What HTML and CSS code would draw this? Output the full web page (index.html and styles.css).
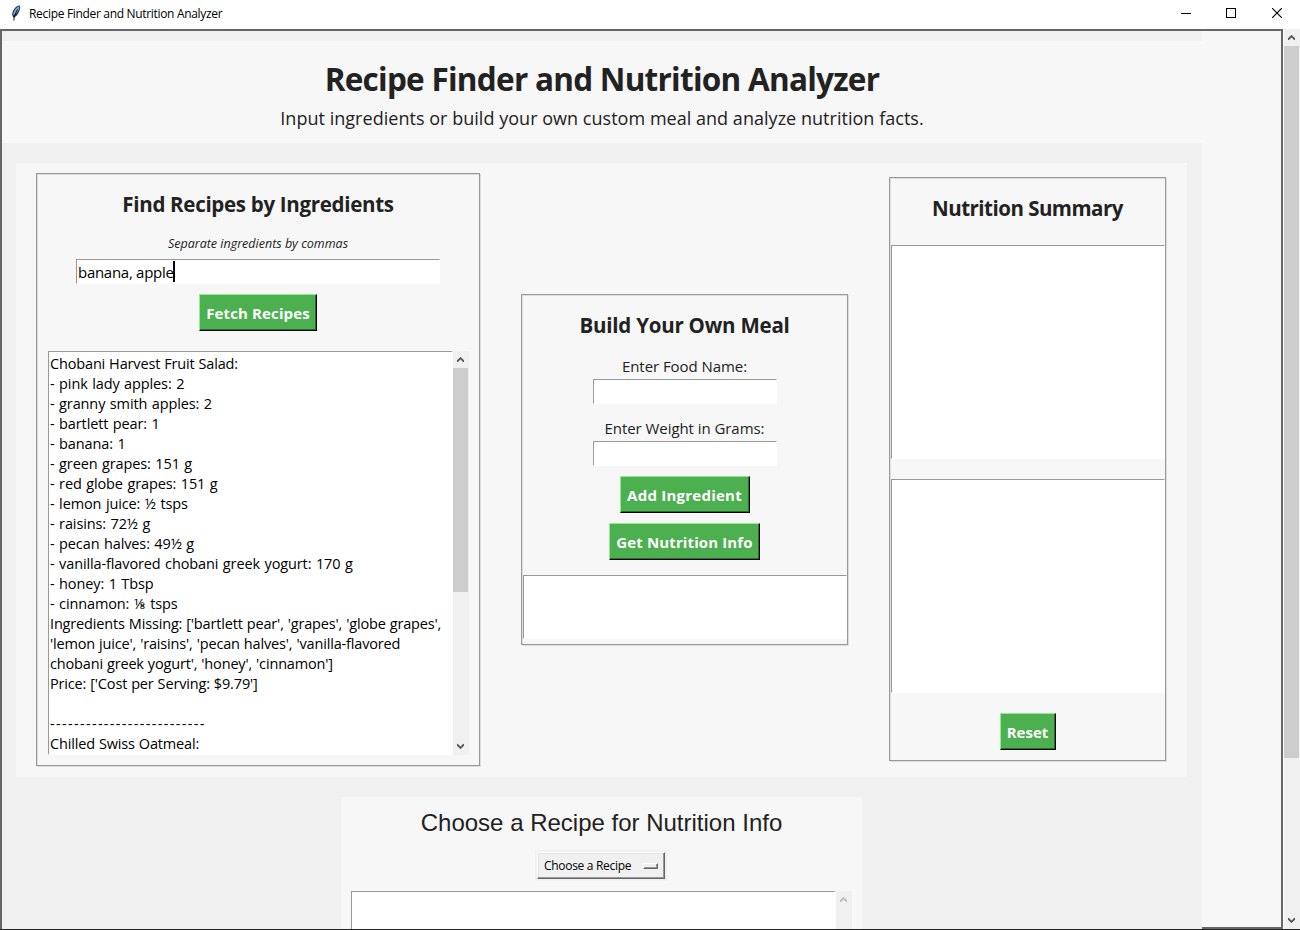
FILE: index.html
```html
<!DOCTYPE html>
<html lang="en">
<head>
<meta charset="utf-8">
<title>Recipe Finder and Nutrition Analyzer</title>
<link rel="stylesheet" href="styles.css">
</head>
<body>
<div class="window">
  <header class="titlebar">
    <svg class="feather" width="10" height="16" viewBox="0 0 10 16"><path d="M9 0.500C6 0.500 3.500 2.500 2 6C1 8.500 1 10 1.800 11.500L2.800 13L4 12C6.500 10.500 8.500 6.500 9.200 3Z" fill="#26303f"/><path d="M8.500 1.300C4.500 2.500 2.500 6 2 10.500C5.800 9 8.300 5.500 8.500 1.300Z" fill="#6aa5e6"/><path d="M6.500 4.500L3.500 10.500L2.800 15.500" stroke="#111" stroke-width="0.900" fill="none"/></svg>
    <span class="titlebar-text">Recipe Finder and Nutrition Analyzer</span>
    <div class="controls">
      <svg width="10" height="10" viewBox="0 0 10 10" shape-rendering="crispEdges"><path d="M0 5.500H10" stroke="#000"/></svg>
      <svg width="10" height="10" viewBox="0 0 10 10" shape-rendering="crispEdges"><rect x="0.500" y="0.500" width="9" height="9" fill="none" stroke="#000"/></svg>
      <svg class="close" width="10" height="10" viewBox="0 0 10 10"><path d="M0 0L10 10M10 0L0 10" stroke="#000" stroke-width="1.100"/></svg>
    </div>
  </header>
  <div class="body">
    <div class="canvas">
      <div class="content">
        <div class="hero">
          <h1>Recipe Finder and Nutrition Analyzer</h1>
          <p>Input ingredients or build your own custom meal and analyze nutrition facts.</p>
        </div>
        <main class="columns">
          <section class="panel find">
            <h2>Find Recipes by Ingredients</h2>
            <p class="hint">Separate ingredients by commas</p>
            <div class="field wide"><span>banana, apple</span><i class="caret"></i></div>
            <button class="btn fetch">Fetch Recipes</button>
            <div class="results">
<pre class="sunken recipes">Chobani Harvest Fruit Salad:
<span class="item">- pink lady apples: 2</span>
<span class="item">- granny smith apples: 2</span>
<span class="item">- bartlett pear: 1</span>
<span class="item">- banana: 1</span>
<span class="item">- green grapes: 151 g</span>
<span class="item">- red globe grapes: 151 g</span>
<span class="item">- lemon juice: ½ tsps</span>
<span class="item">- raisins: 72½ g</span>
<span class="item">- pecan halves: 49½ g</span>
<span class="item">- vanilla-flavored chobani greek yogurt: 170 g</span>
<span class="item">- honey: 1 Tbsp</span>
<span class="item">- cinnamon: ⅛ tsps</span>
Ingredients Missing: ['bartlett pear', 'grapes', 'globe grapes',
'lemon juice', 'raisins', 'pecan halves', 'vanilla-flavored
chobani greek yogurt', 'honey', 'cinnamon']
Price: ['Cost per Serving: $9.79']

<span class="rule">--------------------------</span>
Chilled Swiss Oatmeal:</pre>
              <div class="scrollbar">
                <svg class="arrow" width="7" height="6" viewBox="0 0 7 6"><path d="M0 4.700L3.500 1.200L7 4.700"/></svg>
                <div class="thumb"></div>
                <svg class="arrow down" width="7" height="6" viewBox="0 0 7 6"><path d="M0 1.300L3.500 4.800L7 1.300"/></svg>
              </div>
            </div>
          </section>
          <section class="panel build">
            <h2>Build Your Own Meal</h2>
            <label class="food">Enter Food Name:</label>
            <div class="field"></div>
            <label class="weight">Enter Weight in Grams:</label>
            <div class="field"></div>
            <button class="btn add">Add Ingredient</button>
            <button class="btn info">Get Nutrition Info</button>
            <div class="sunken meal"></div>
          </section>
          <section class="panel summary">
            <h2>Nutrition Summary</h2>
            <div class="sunken box"></div>
            <div class="sunken box"></div>
            <button class="btn reset">Reset</button>
          </section>
        </main>
        <section class="chooser">
          <h3>Choose a Recipe for Nutrition Info</h3>
          <div class="option-wrap"><div class="option"><span>Choose a Recipe</span><i class="indicator"></i></div></div>
          <div class="output">
            <div class="sunken"></div>
            <div class="scrollbar disabled">
              <svg class="arrow" width="7" height="6" viewBox="0 0 7 6"><path d="M0 4.700L3.500 1.200L7 4.700"/></svg>
            </div>
          </div>
        </section>
      </div>
    </div>
    <div class="scrollbar main-scroll">
      <svg class="arrow" width="7" height="6" viewBox="0 0 7 6"><path d="M0 4.700L3.500 1.200L7 4.700"/></svg>
      <div class="thumb"></div>
      <svg class="arrow down" width="7" height="6" viewBox="0 0 7 6"><path d="M0 1.300L3.500 4.800L7 1.300"/></svg>
    </div>
  </div>
</div>
</body>
</html>
```
FILE: styles.css
```css
* { box-sizing: border-box; margin: 0; padding: 0; }
body { font-family: "Open Sans", "Noto Sans", sans-serif; color: #222; background: #fff; overflow: hidden; }
.window { width: 1300px; height: 930px; display: flex; flex-direction: column; border-bottom: 1px solid #222; white-space: nowrap; }

.titlebar { height: 29px; flex: none; display: flex; align-items: flex-start; padding: 5px 18px 0 11px; color: #000; }
.feather { margin-right: 8px; flex: none; }
.titlebar-text { font-size: 12px; line-height: 17px; letter-spacing: -0.320px; }
.controls { margin: 3px 0 0 auto; display: flex; gap: 35px; }
.close { margin-left: 1px; }

.body { flex: 1; min-height: 0; display: flex; }
.canvas { width: 1283px; height: 900px; border: 2px solid #666; background: #f7f7f7; flex: none; }
.content { width: 1200px; height: 898px; padding-top: 10px; background: #f0f0f0; overflow: hidden; }

.hero { height: 102px; background: #f7f7f7; text-align: center; }
.hero h1 { font-size: 31.500px; line-height: 44px; padding-top: 16px; letter-spacing: -0.740px; }
.hero p { font-size: 18px; line-height: 26px; margin-top: 4px; letter-spacing: 0.030px; }

.columns { width: 1171px; height: 614px; margin: 20px 0 0 14px; background: #f7f7f7; padding: 0 21px 0 20px; display: flex; align-items: flex-start; gap: 41px; }
.panel { border: 1px solid #999; box-shadow: inset 1px 1px 0 #ddd, 1px 1px 0 #ddd; display: flex; flex-direction: column; align-items: center; }
.panel h2 { font-size: 20.500px; line-height: 28px; padding-top: 16px; height: 44px; letter-spacing: -0.300px; }
.panel.build h2 { letter-spacing: -0.220px; }
.panel.summary h2 { height: 47px; letter-spacing: -0.520px; }
.find { width: 444px; height: 593px; margin-top: 10px; }
.build { width: 327px; height: 351px; margin-top: 131px; }
.summary { width: 277px; height: 584px; margin-top: 14px; }

.hint { font-size: 12.500px; line-height: 18px; font-style: italic; margin-top: 17px; }
.field { width: 184px; height: 25px; background: #fff; border: 1px solid #fff; border-top-color: #999; border-left-color: #999; flex: none; display: flex; }
.field.wide { width: 364px; margin-top: 6px; padding: 1px; font-size: 15px; line-height: 22px; color: #000; letter-spacing: -0.280px; }
.caret { width: 2px; height: 21px; background: #000; margin-left: -0.500px; }

.btn { height: 37px; flex: none; background: #4caf50; color: #fff; font: bold 15px/36px "Open Sans", "Noto Sans", sans-serif; border: 1px solid #000; border-top-color: #90ee90; border-left-color: #90ee90; box-shadow: inset -1px -1px 0 #2a6e2c; text-align: center; }
.fetch { width: 118px; margin-top: 10px; letter-spacing: 0.120px; }
.add { width: 130px; margin-top: 10px; letter-spacing: 0.240px; }
.info { width: 151px; margin-top: 10px; letter-spacing: 0.120px; }
.reset { width: 56px; margin-top: 20px; }

.sunken { background: #fff; border: 1px solid #fff; border-top-color: #999; border-left-color: #999; }
.results { display: flex; width: 421px; height: 404px; margin-top: 20px; }
.recipes { width: 405px; height: 404px; overflow: hidden; padding: 2px 0 0 1.500px; border-right-width: 2px; font: 14.500px/20px "Open Sans", "Noto Sans", sans-serif; color: #000; letter-spacing: -0.160px; word-spacing: 0.400px; }
.item { letter-spacing: -0.120px; word-spacing: 0.900px; }
.rule { letter-spacing: 1.320px; }

.scrollbar { width: 16px; background: #f0f0f0; display: flex; flex-direction: column; padding-right: 1px; }
.arrow { margin: 6px auto 0 4px; flex: none; }
.arrow path { fill: none; stroke: #555; stroke-width: 1.900; }
.thumb { background: #cdcdcd; height: 224px; margin-top: 5px; flex: none; }
.arrow.down { margin: auto auto 6px 4px; }
.disabled .arrow path { stroke: #bbb; }

.build label { font-size: 15px; line-height: 20px; margin-bottom: 3px; letter-spacing: -0.060px; }
.build .food { margin-top: 17px; }
.build .weight { margin-top: 14px; }
.meal { width: 324px; height: 64px; margin-top: 15px; }

.box { width: 274px; height: 214px; margin-top: 20px; align-self: flex-end; flex: none; }

.chooser { width: 521px; height: 150px; margin: 20px 0 0 339px; background: #f7f7f7; padding: 0 10px; display: flex; flex-direction: column; align-items: center; }
.chooser h3 { font: 24px/28px "Liberation Sans", Arial, sans-serif; padding-top: 12px; height: 53px; flex: none; }
.option-wrap { background: #f0f0f0; padding: 2px; margin-right: 1px; flex: none; }
.option { width: 128px; height: 27px; background: #f0f0f0; border: 1px solid #666; border-top-color: #fff; border-left-color: #fff; box-shadow: inset -1px -1px 0 #999, inset 1px 1px 0 #e3e3e3; display: flex; align-items: center; justify-content: space-between; padding: 0 6px; font-size: 12px; color: #000; letter-spacing: -0.300px; }
.indicator { width: 15px; height: 6px; border: 1px solid #666; border-top-color: #fff; border-left-color: #fff; box-shadow: inset -1px -1px 0 #999; }
.output { display: flex; width: 501px; height: 60px; margin-top: 10px; flex: none; }
.output .sunken { width: 485px; border-right-width: 2px; }

.main-scroll { margin-left: 1px; height: 900px; }
.main-scroll .thumb { height: 712px; }
```
